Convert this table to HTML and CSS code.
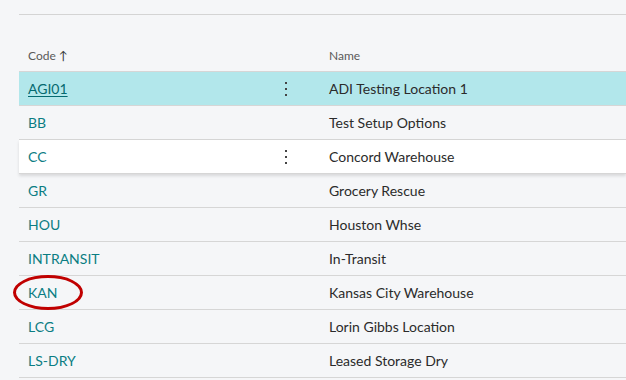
FILE: index.html
```html
<!DOCTYPE html>
<html>
<head>
<meta charset="utf-8">
<link rel="stylesheet" href="styles.css">
</head>
<body>
<div class="page">
  <div class="topline"></div>
  <div class="list">
    <div class="head">
      <div class="hcell code">Code <span class="arrow">↑</span></div>
      <div class="hcell act"></div>
      <div class="hcell name">Name</div>
    </div>
    <div class="row selected">
      <div class="cell code"><a class="link current">AGI01</a></div>
      <div class="cell act"><span class="dots"><i></i><i></i><i></i></span></div>
      <div class="cell name">ADI Testing Location 1</div>
    </div>
    <div class="row">
      <div class="cell code"><a class="link">BB</a></div>
      <div class="cell act"></div>
      <div class="cell name">Test Setup Options</div>
    </div>
    <div class="row hover">
      <div class="cell code"><a class="link">CC</a></div>
      <div class="cell act"><span class="dots"><i></i><i></i><i></i></span></div>
      <div class="cell name">Concord Warehouse</div>
    </div>
    <div class="row">
      <div class="cell code"><a class="link">GR</a></div>
      <div class="cell act"></div>
      <div class="cell name">Grocery Rescue</div>
    </div>
    <div class="row">
      <div class="cell code"><a class="link">HOU</a></div>
      <div class="cell act"></div>
      <div class="cell name">Houston Whse</div>
    </div>
    <div class="row">
      <div class="cell code"><a class="link">INTRANSIT</a></div>
      <div class="cell act"></div>
      <div class="cell name">In-Transit</div>
    </div>
    <div class="row">
      <div class="cell code"><a class="link">KAN</a><span class="circle"></span></div>
      <div class="cell act"></div>
      <div class="cell name">Kansas City Warehouse</div>
    </div>
    <div class="row">
      <div class="cell code"><a class="link">LCG</a></div>
      <div class="cell act"></div>
      <div class="cell name">Lorin Gibbs Location</div>
    </div>
    <div class="row">
      <div class="cell code"><a class="link">LS-DRY</a></div>
      <div class="cell act"></div>
      <div class="cell name">Leased Storage Dry</div>
    </div>
  </div>
</div>
</body>
</html>
```

FILE: styles.css
```css
* { box-sizing: border-box; }
html, body { margin: 0; padding: 0; }
body {
  background: #f5f6f8;
  font-family: "Lato", "Open Sans", sans-serif;
  color: #2b2b2b;
  width: 626px;
  height: 380px;
  overflow: hidden;
}
.page { padding-top: 14px; }
.topline {
  margin-left: 19px;
  border-top: 1px solid #d4d4d4;
}
.list { margin-left: 19px; }
.head, .row {
  display: grid;
  grid-template-columns: 229px 75px 1fr;
}
.head { height: 57px; }
.hcell {
  display: flex;
  align-items: flex-end;
  padding-bottom: 8px;
  font-size: 12px;
  color: #5a5a5a;
  border-bottom: 1px solid #d6d6d6;
}
.hcell.code { padding-left: 9px; }
.hcell.name { padding-left: 6px; }
.arrow { margin-left: 3px; font-size: 12px; color: #333; }
.row { height: 34px; }
.cell {
  display: flex;
  align-items: center;
  border-bottom: 1px solid #d6d6d6;
  font-size: 14px;
  position: relative;
}
.cell.code { padding-left: 9px; }
.cell.name { padding-left: 6px; }
.cell.act { justify-content: center; }
.row.selected { background: #b2e7eb; }
.row.hover {
  background: #ffffff;
  box-shadow: 0 2px 3px rgba(0,0,0,0.12);
  position: relative;
  z-index: 1;
}
.link { color: #0b7d83; text-decoration: none; }
.link.current { color: #056a70; text-decoration: underline; text-underline-offset: 2px; }
.dots { display: flex; flex-direction: column; gap: 4px; }
.dots i { display: block; width: 2px; height: 2px; background: #444; }
.circle {
  position: absolute;
  left: -6px;
  top: -1px;
  width: 70px;
  height: 35px;
  border: 3px solid #c00000;
  border-radius: 50%;
}
```
